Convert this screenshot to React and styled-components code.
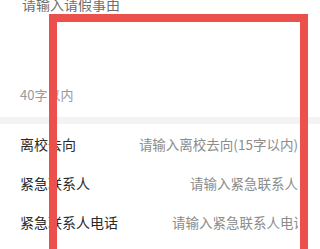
import React from "react";
import styled, { createGlobalStyle } from "styled-components";

const GlobalStyle = createGlobalStyle`
  html, body {
    margin: 0;
    padding: 0;
    background: #fff;
  }
  body {
    font-family: "Noto Sans CJK SC", "Noto Sans", sans-serif;
  }
`;

const Page = styled.div`
  position: relative;
  width: 320px;
  height: 249px;
  overflow: hidden;
  background: #fff;
`;

const ReasonSection = styled.div`
  padding: 0 20px 14px 20px;
`;

const ReasonInput = styled.textarea`
  display: block;
  width: 100%;
  height: 91px;
  margin: -4px 0 0 0;
  padding: 0 0 0 2px;
  border: none;
  outline: none;
  resize: none;
  background: transparent;
  font-family: inherit;
  font-size: 14px;
  line-height: 16px;
  color: #333;

  &::placeholder {
    color: #6f6f6f;
  }
`;

const Hint = styled.div`
  font-size: 13px;
  line-height: 16px;
  color: #999;
`;

const Divider = styled.div`
  height: 7px;
  background: #f3f3f5;
`;

const Row = styled.div`
  display: flex;
  align-items: center;
  height: 39px;
  padding: 0 22px 0 20px;
`;

const Label = styled.span`
  flex-shrink: 0;
  font-size: 14px;
  color: #2b2b2b;
  white-space: nowrap;
`;

const Value = styled.div`
  flex: 1;
  min-width: 0;
  margin-left: 54px;
  font-size: 13.5px;
  color: #8c8c8c;
  text-align: right;
  white-space: nowrap;
  overflow: hidden;
`;

const Highlight = styled.div`
  position: absolute;
  left: 49px;
  top: 14px;
  width: 259px;
  height: 320px;
  box-sizing: border-box;
  border: 8px solid #eb504d;
  pointer-events: none;
`;

const fields = [
  { label: "离校去向", placeholder: "请输入离校去向(15字以内)" },
  { label: "紧急联系人", placeholder: "请输入紧急联系人" },
  { label: "紧急联系人电话", placeholder: "请输入紧急联系人电话" },
];

export default function App() {
  return (
    <Page>
      <GlobalStyle />
      <ReasonSection>
        <ReasonInput placeholder="请输入请假事由" readOnly />
        <Hint>40字以内</Hint>
      </ReasonSection>
      <Divider />
      {fields.map((f) => (
        <Row key={f.label}>
          <Label>{f.label}</Label>
          <Value>{f.placeholder}</Value>
        </Row>
      ))}
      <Highlight />
    </Page>
  );
}
